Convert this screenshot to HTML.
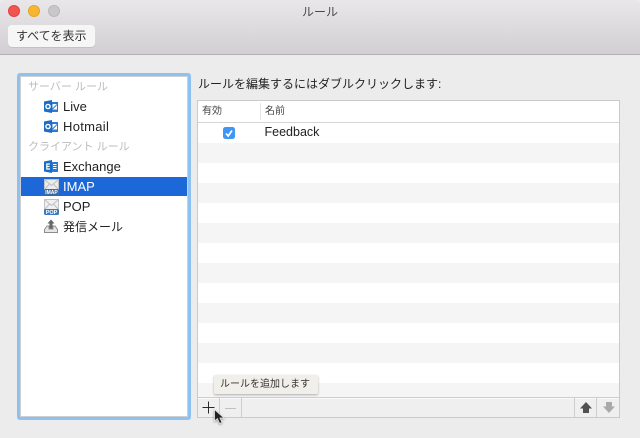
<!DOCTYPE html>
<html lang="ja"><head><meta charset="utf-8"><title>ルール</title>
<style>
*{box-sizing:border-box;margin:0;padding:0}
html,body{width:640px;height:438px;overflow:hidden;background:#ececec}
body{position:relative;font-family:"Liberation Sans","Noto Sans CJK JP",sans-serif;font-size:12px;color:#222}
.a{position:absolute;white-space:nowrap}
.tb{left:0;top:0;width:640px;height:55px;background:linear-gradient(#e9e7e9,#d1cfd1);border-bottom:1px solid #b1b1b1;border-radius:5px 5px 0 0}
.dot{width:12px;height:12px;border-radius:50%;top:5px}
.sb{left:17px;top:73px;width:174px;height:347px;background:#8cc1f2;border-radius:3px}
.sbi{left:20px;top:76px;width:168px;height:341px;background:#fff;border:1px solid #cfcfcf}
.h{left:28px;font-size:11px;color:#bdbdbd;line-height:16px}
.i{left:63px;font-size:13px;line-height:16px;color:#222}
.r{left:198px;width:421px;height:20px;background:#f5f5f5}
svg{position:absolute;overflow:visible}
</style></head><body>
<div class="a tb"></div>
<div class="a dot" style="left:8px;background:#f25450;border:1px solid #e0443f"></div>
<div class="a dot" style="left:28px;background:#f8b62f;border:1px solid #e5a428"></div>
<div class="a dot" style="left:48px;background:#c9c8c9;border:1px solid #b9b8b9"></div>
<div class="a" style="left:0;width:640px;top:4px;text-align:center;font-size:12px;line-height:16px;color:#4a4a4a">ルール</div>
<div class="a" style="left:8px;top:25px;width:87px;height:22px;background:#f6f6f6;border-radius:4px;box-shadow:0 1px 0 #c2c2c2;font-size:12px;line-height:22px;color:#333;padding-left:8px">すべてを表示</div>

<div class="a sb"></div><div class="a sbi"></div>
<div class="a h" style="top:79px">サーバー ルール</div>
<div class="a i" style="top:99px">Live</div>
<div class="a i" style="top:119px;letter-spacing:.3px">Hotmail</div>
<div class="a h" style="top:139px">クライアント ルール</div>
<div class="a i" style="top:159px">Exchange</div>
<div class="a" style="left:21px;top:177px;width:166px;height:19px;background:#1d68d8"></div>
<div class="a i" style="top:179px;color:#fff">IMAP</div>
<div class="a i" style="top:199px">POP</div>
<div class="a i" style="top:219px;font-size:12px">発信メール</div>

<svg style="left:44px;top:100px" width="14" height="14"><rect x="5" y="2" width="9" height="10" fill="#2a7bd0"/><path d="M0 1.500L8 0V13L0 11.500Z" fill="#1b6cc2"/><rect x="8.500" y="4" width="4.500" height="5.500" fill="#fff"/><path d="M8.500 9L13 4.500" stroke="#2a7bd0"/><circle cx="4" cy="6.500" r="2.100" fill="none" stroke="#fff" stroke-width="1.400"/></svg>
<svg style="left:44px;top:120px" width="14" height="14"><rect x="5" y="2" width="9" height="10" fill="#2a7bd0"/><path d="M0 1.500L8 0V13L0 11.500Z" fill="#1b6cc2"/><rect x="8.500" y="4" width="4.500" height="5.500" fill="#fff"/><path d="M8.500 9L13 4.500" stroke="#2a7bd0"/><circle cx="4" cy="6.500" r="2.100" fill="none" stroke="#fff" stroke-width="1.400"/></svg>
<svg style="left:44px;top:160px" width="14" height="14"><rect x="5" y="2" width="9" height="10" fill="#2a7bd0"/><path d="M0 1.500L8 0V13L0 11.500Z" fill="#1b6cc2"/><path d="M6 4H2.800V9H6M2.800 6.500H5.500" fill="none" stroke="#fff" stroke-width="1.200"/><path d="M9 4.500h3.500M9 6.500h3.500M9 8.500h3.500" stroke="#fff"/></svg>
<svg style="left:44px;top:179px" width="15" height="16"><rect x=".5" y=".5" width="14" height="10" fill="#ececec" stroke="#c0c4c8"/><path d="M1 1L7.500 6.500L14 1M1 10L5.500 5M14 10L9.500 5" fill="none" stroke="#bcc0c6"/><rect x="0" y="10" width="15" height="6" rx="1.500" fill="#3a6ea8"/><text x="7.500" y="15" font-size="5" font-weight="bold" fill="#fff" text-anchor="middle" font-family="Liberation Sans">IMAP</text></svg>
<svg style="left:44px;top:199px" width="15" height="16"><rect x=".5" y=".5" width="14" height="10" fill="#f0f0f0" stroke="#c0c4c8"/><path d="M1 1L7.500 6.500L14 1M1 10L5.500 5M14 10L9.500 5" fill="none" stroke="#bcc0c6"/><rect x="0" y="10" width="15" height="6" rx="1.500" fill="#3b79c0"/><text x="7.500" y="15" font-size="5.500" font-weight="bold" fill="#fff" text-anchor="middle" font-family="Liberation Sans">POP</text></svg>
<svg style="left:44px;top:219px" width="14" height="14"><path d="M3 7L.5 10.500V13.500H13.500V10.500L11 7H9V10H5V7Z" fill="#e6e6e6" stroke="#8c8c8c"/><path d="M7 .5L10.500 4.500H8.500V9.500H5.500V4.500H3.500Z" fill="#666"/></svg>

<div class="a" style="left:198px;top:76px;font-size:12px;line-height:16px;color:#222">ルールを編集するにはダブルクリックします:</div>

<div class="a" style="left:197px;top:100px;width:423px;height:318px;background:#fff;border:1px solid #cacaca"></div>
<div class="a" style="left:198px;top:122px;width:421px;height:1px;background:#d4d4d4"></div>
<div class="a" style="left:260px;top:103px;width:1px;height:17px;background:#e4e4e4"></div>
<div class="a" style="left:202px;top:105px;font-size:10px;line-height:14px;color:#444">有効</div>
<div class="a" style="left:265px;top:105px;font-size:10px;line-height:14px;color:#444">名前</div>
<div class="a" style="left:264.500px;top:124px;font-size:12.500px;line-height:16px;color:#222">Feedback</div>
<div class="a" style="left:223px;top:127px;width:12px;height:12px;border-radius:2.500px;background:#3f96f4"></div>
<svg style="left:223px;top:127px" width="12" height="12"><path d="M3 6.500L5.200 9L9 3.500" fill="none" stroke="#fff" stroke-width="1.700"/></svg>

<div class="a r" style="top:143px"></div>
<div class="a r" style="top:183px"></div>
<div class="a r" style="top:223px"></div>
<div class="a r" style="top:263px"></div>
<div class="a r" style="top:303px"></div>
<div class="a r" style="top:343px"></div>
<div class="a r" style="top:383px;height:14px"></div>

<div class="a" style="left:198px;top:397px;width:421px;height:1px;background:#cdcdcd"></div>
<div class="a" style="left:198px;top:398px;width:421px;height:1px;background:#fafafa"></div>
<div class="a" style="left:198px;top:399px;width:421px;height:18px;background:#efefef"></div>
<div class="a" style="left:219px;top:398px;width:1px;height:19px;background:#cdcdcd"></div>
<div class="a" style="left:241px;top:398px;width:1px;height:19px;background:#cdcdcd"></div>
<div class="a" style="left:574px;top:398px;width:1px;height:19px;background:#cdcdcd"></div>
<div class="a" style="left:596px;top:398px;width:1px;height:19px;background:#cdcdcd"></div>
<svg style="left:198px;top:398px" width="44" height="20"><path d="M10.500 3.500V15.500M4.500 9.500H16.500" stroke="#2a2a2a" stroke-width="1"/><path d="M27 10.500H38" stroke="#c0c0c0"/></svg>
<svg style="left:575px;top:398px" width="44" height="20"><path d="M11 4L17 10.500H14V15H8V10.500H5Z" fill="#505050"/><path d="M34 15L40 8.500H37V4H31V8.500H28Z" fill="#a9a9a9"/></svg>

<div class="a" style="left:214px;top:375px;width:104px;height:19px;background:#f1efe9;box-shadow:0 1px 2px rgba(0,0,0,.3);border-radius:1px;font-size:10px;line-height:20px;color:#333;padding-left:6px">ルールを追加します</div>
<svg style="left:214px;top:409px" width="12" height="16"><path d="M.5 .5V12L3.400 9.600L5.600 14.500L8 13.500L6 9H10Z" fill="#222" stroke="#e8e8e8" stroke-width=".8" style="filter:drop-shadow(0 1px 1px rgba(0,0,0,.35))"/></svg>
</body></html>
